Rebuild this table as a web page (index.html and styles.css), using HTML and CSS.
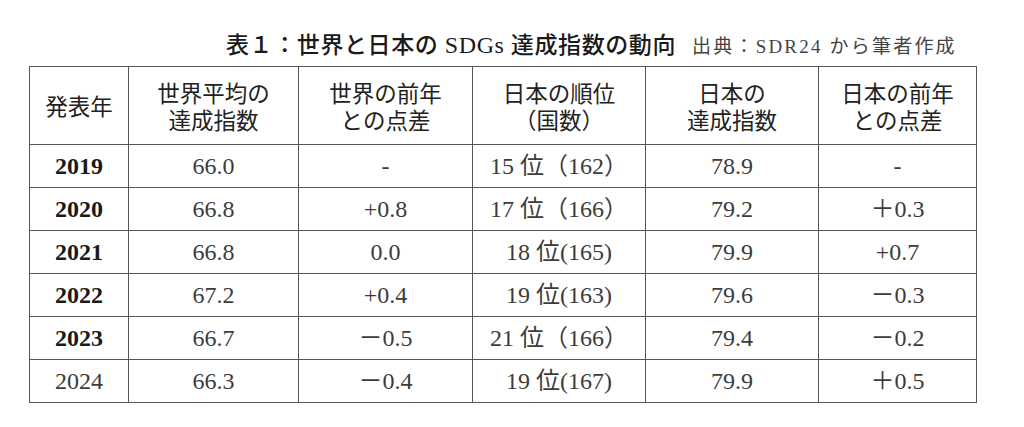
FILE: index.html
```html
<!DOCTYPE html>
<html lang="ja">
<head>
<meta charset="utf-8">
<title>表1：世界と日本の SDGs 達成指数の動向</title>
<link rel="stylesheet" href="styles.css">
</head>
<body>
<div class="page">
  <div class="caption">
    <span class="caption-title">表１：世界と日本の <span class="latin">SDGs</span> 達成指数の動向</span>
    <span class="caption-source">出典：SDR24 から筆者作成</span>
  </div>
  <table class="sdg-table">
    <colgroup>
      <col class="c1"><col class="c2"><col class="c3"><col class="c4"><col class="c5"><col class="c6">
    </colgroup>
    <thead>
      <tr>
        <th>発表年</th>
        <th>世界平均の<br>達成指数</th>
        <th>世界の前年<br>との点差</th>
        <th>日本の順位<br>（国数）</th>
        <th>日本の<br>達成指数</th>
        <th>日本の前年<br>との点差</th>
      </tr>
    </thead>
    <tbody>
      <tr><td class="year">2019</td><td>66.0</td><td>-</td><td>15 位（162）</td><td>78.9</td><td>-</td></tr>
      <tr><td class="year">2020</td><td>66.8</td><td>+0.8</td><td>17 位（166）</td><td>79.2</td><td>＋0.3</td></tr>
      <tr><td class="year">2021</td><td>66.8</td><td>0.0</td><td>18 位(165)</td><td>79.9</td><td>+0.7</td></tr>
      <tr><td class="year">2022</td><td>67.2</td><td>+0.4</td><td>19 位(163)</td><td>79.6</td><td>－0.3</td></tr>
      <tr><td class="year">2023</td><td>66.7</td><td>－0.5</td><td>21 位（166）</td><td>79.4</td><td>－0.2</td></tr>
      <tr><td class="year light">2024</td><td>66.3</td><td>－0.4</td><td>19 位(167)</td><td>79.9</td><td>＋0.5</td></tr>
    </tbody>
  </table>
</div>
</body>
</html>
```

FILE: styles.css
```css
html, body {
  margin: 0;
  padding: 0;
  background: #ffffff;
}

.page {
  padding: 30px 0 0 29px;
  font-family: "Liberation Serif", "Noto Sans CJK JP", serif;
  color: #333;
}

.caption {
  display: flex;
  align-items: baseline;
  gap: 16px;
  padding-left: 197px;
  height: 30px;
  line-height: 30px;
  margin-bottom: 6px;
}

.caption-title {
  font-size: 23px;
  font-weight: 500;
  color: #1a1a1a;
  letter-spacing: 0.6px;
}

.caption-title .latin {
  font-size: 24px;
}

.caption-source {
  font-size: 19px;
  color: #444;
  letter-spacing: 2.2px;
}

.sdg-table {
  border-collapse: collapse;
  table-layout: fixed;
  width: 947px;
}

.c1 { width: 99px; }
.c2 { width: 170px; }
.c3 { width: 174px; }
.c4 { width: 173px; }
.c5 { width: 173px; }
.c6 { width: 158px; }

.sdg-table th,
.sdg-table td {
  border: 1px solid #555;
  text-align: center;
  padding: 0;
}

.sdg-table th {
  height: 77px;
  font-family: "Noto Sans CJK JP", sans-serif;
  font-weight: 400;
  font-size: 22.5px;
  line-height: 27px;
  color: #222;
}

.sdg-table td {
  height: 42px;
  font-size: 24px;
  line-height: 30px;
  color: #3c3c3c;
}

.sdg-table td.year {
  font-weight: 700;
  color: #1a1a1a;
}

.sdg-table td.year.light {
  font-weight: 400;
  color: #3c3c3c;
}
```
